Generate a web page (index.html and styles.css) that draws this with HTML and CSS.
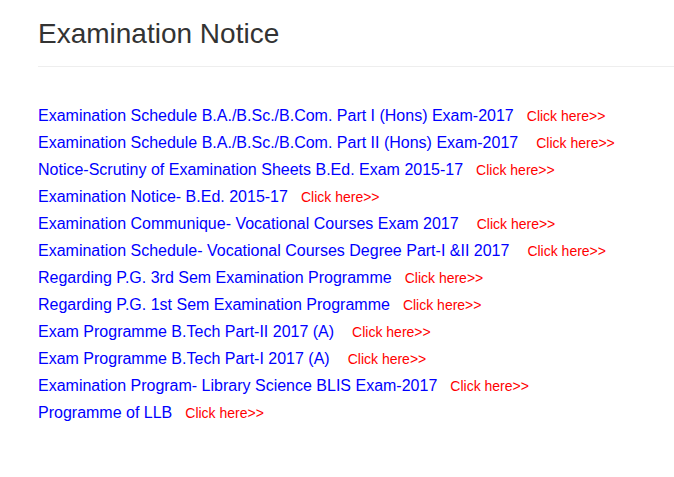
FILE: index.html
```html
<!DOCTYPE html>
<html>
<head>
<meta charset="utf-8">
<link rel="stylesheet" href="styles.css">
</head>
<body>
<div class="page">
  <h2 class="title">Examination Notice</h2>
  <hr class="rule">
  <ul class="list">
    <li><a class="doc" href="#">Examination Schedule B.A./B.Sc./B.Com. Part I (Hons) Exam-2017</a><a class="click" href="#">Click here&gt;&gt;</a></li>
    <li><a class="doc" href="#">Examination Schedule B.A./B.Sc./B.Com. Part II (Hons) Exam-2017</a><a class="click wide" href="#">Click here&gt;&gt;</a></li>
    <li><a class="doc" href="#">Notice-Scrutiny of Examination Sheets B.Ed. Exam 2015-17</a><a class="click" href="#">Click here&gt;&gt;</a></li>
    <li><a class="doc" href="#">Examination Notice- B.Ed. 2015-17</a><a class="click" href="#">Click here&gt;&gt;</a></li>
    <li><a class="doc" href="#">Examination Communique- Vocational Courses Exam 2017</a><a class="click wide" href="#">Click here&gt;&gt;</a></li>
    <li><a class="doc" href="#">Examination Schedule- Vocational Courses Degree Part-I &amp;II 2017</a><a class="click wide" href="#">Click here&gt;&gt;</a></li>
    <li><a class="doc" href="#">Regarding P.G. 3rd Sem Examination Programme</a><a class="click" href="#">Click here&gt;&gt;</a></li>
    <li><a class="doc" href="#">Regarding P.G. 1st Sem Examination Programme</a><a class="click" href="#">Click here&gt;&gt;</a></li>
    <li><a class="doc" href="#">Exam Programme B.Tech Part-II 2017 (A)</a><a class="click wide" href="#">Click here&gt;&gt;</a></li>
    <li><a class="doc" href="#">Exam Programme B.Tech Part-I 2017 (A)</a><a class="click wide" href="#">Click here&gt;&gt;</a></li>
    <li><a class="doc" href="#">Examination Program- Library Science BLIS Exam-2017</a><a class="click" href="#">Click here&gt;&gt;</a></li>
    <li><a class="doc" href="#">Programme of LLB</a><a class="click" href="#">Click here&gt;&gt;</a></li>
  </ul>
</div>
</body>
</html>
```
FILE: styles.css
```css
html, body {
  margin: 0;
  padding: 0;
  background: #ffffff;
}
body {
  font-family: "Liberation Sans", Arial, sans-serif;
  color: #333333;
  overflow: hidden;
}
.page {
  padding: 17px 0 0 38px;
}
.title {
  margin: 0;
  font-size: 28px;
  font-weight: 400;
  line-height: 33px;
  color: #333333;
}
.rule {
  margin: 16px 0 0 0;
  border: 0;
  border-top: 1px solid #eeeeee;
  height: 0;
}
.list {
  list-style: none;
  margin: 35px 0 0 0;
  padding: 0;
}
.list li {
  display: block;
  height: 27px;
  line-height: 27px;
  font-size: 16px;
  white-space: nowrap;
}
.doc {
  color: #0000ff;
  font-size: 16px;
  text-decoration: none;
}
.click {
  color: #ff0000;
  font-size: 14px;
  text-decoration: none;
  margin-left: 13px;
}
.click.wide {
  margin-left: 18px;
}
```
